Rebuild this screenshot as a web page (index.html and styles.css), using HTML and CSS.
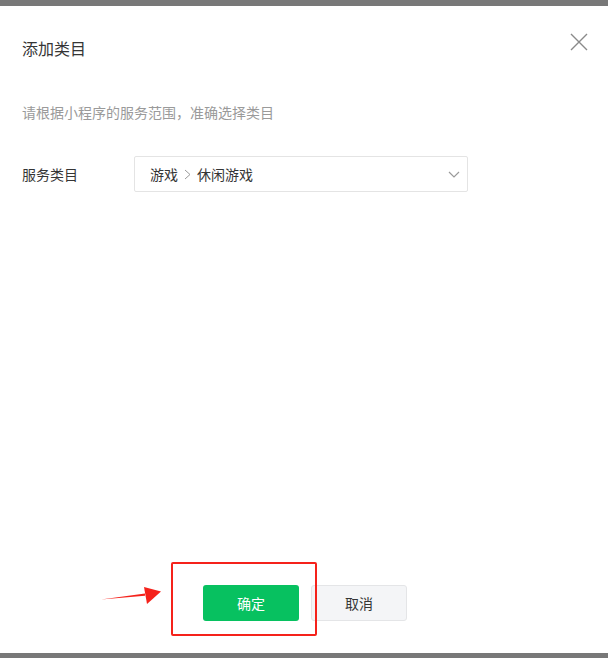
FILE: index.html
```html
<!DOCTYPE html>
<html lang="zh-CN">
<head>
<meta charset="utf-8">
<link rel="stylesheet" href="styles.css">
</head>
<body>
<div class="dialog">
  <div class="header">
    <h1 class="title">添加类目</h1>
    <button class="close" aria-label="关闭">
      <svg width="18" height="18" viewBox="0 0 18 18"><path d="M1 1L17 17M17 1L1 17" stroke="#8a8a8a" stroke-width="1.4" fill="none"/></svg>
    </button>
  </div>
  <p class="desc">请根据小程序的服务范围，准确选择类目</p>
  <div class="form-row">
    <label class="label">服务类目</label>
    <div class="select">
      <span class="value">游戏<svg class="sep" width="7" height="11" viewBox="0 0 7 11"><path d="M1 1L6 5.5L1 10" stroke="#9a9a9a" stroke-width="1" fill="none"/></svg>休闲游戏</span>
      <svg class="chevron" width="12" height="7" viewBox="0 0 12 7"><path d="M1 1L6 6L11 1" stroke="#9a9a9a" stroke-width="1.2" fill="none"/></svg>
    </div>
  </div>
  <div class="spacer"></div>
  <div class="footer">
    <div class="arrow">
      <svg width="62" height="20" viewBox="0 0 62 20"><path d="M0 13.5L44 7.5L44 9.8Z" fill="#f5221b"/><path d="M43 1L60 5.5L46 18Z" fill="#f5221b"/></svg>
    </div>
    <div class="highlight"></div>
    <button class="btn primary">确定</button>
    <button class="btn default">取消</button>
  </div>
</div>
</body>
</html>
```

FILE: styles.css
```css
* { box-sizing: border-box; }
html, body { margin: 0; padding: 0; }
body {
  background: #787878;
  width: 608px;
  height: 658px;
  padding-top: 6px;
  font-family: "Noto Sans CJK SC", "Noto Sans", sans-serif;
  color: #353535;
}
.dialog {
  background: #fff;
  height: 647px;
  display: flex;
  flex-direction: column;
}
.header {
  display: flex;
  justify-content: space-between;
  align-items: flex-start;
  padding: 27px 20px 0 22px;
}
.title {
  margin: 3px 0 0;
  font-size: 16px;
  line-height: 24px;
  font-weight: normal;
  color: #353535;
}
.close {
  border: 0;
  background: none;
  padding: 0;
  width: 18px;
  height: 18px;
  display: block;
}
.close svg { display: block; }
.desc {
  margin: 42px 0 0 22px;
  font-size: 14px;
  line-height: 20px;
  color: #9a9a9a;
}
.form-row {
  display: flex;
  align-items: center;
  margin-top: 34px;
  padding-left: 22px;
}
.label {
  width: 112px;
  font-size: 14px;
  line-height: 20px;
  color: #353535;
}
.select {
  width: 334px;
  height: 36px;
  border: 1px solid #e4e4e4;
  border-radius: 2px;
  display: flex;
  align-items: center;
  justify-content: space-between;
  padding: 0 7px 0 15px;
}
.value {
  font-size: 14px;
  line-height: 20px;
  color: #353535;
  display: flex;
  align-items: center;
}
.sep { margin: 0 6px 0 6px; }
.chevron { display: block; }
.spacer { flex: 1; }
.footer {
  position: relative;
  display: flex;
  justify-content: center;
  gap: 12px;
  padding: 0 0 32px 2px;
}
.btn {
  width: 96px;
  height: 36px;
  border-radius: 3px;
  font-family: inherit;
  font-size: 14px;
  padding: 0;
}
.primary {
  background: #07c160;
  border: 0;
  color: #fff;
}
.default {
  background: #f4f5f7;
  border: 1px solid #e4e5e7;
  color: #353535;
}
.highlight {
  position: absolute;
  left: 171px;
  top: -23px;
  width: 146px;
  height: 74px;
  border: 2px solid #f5221b;
  border-radius: 2px;
}
.arrow {
  position: absolute;
  left: 101px;
  top: 1px;
}
.arrow svg { display: block; }
```
